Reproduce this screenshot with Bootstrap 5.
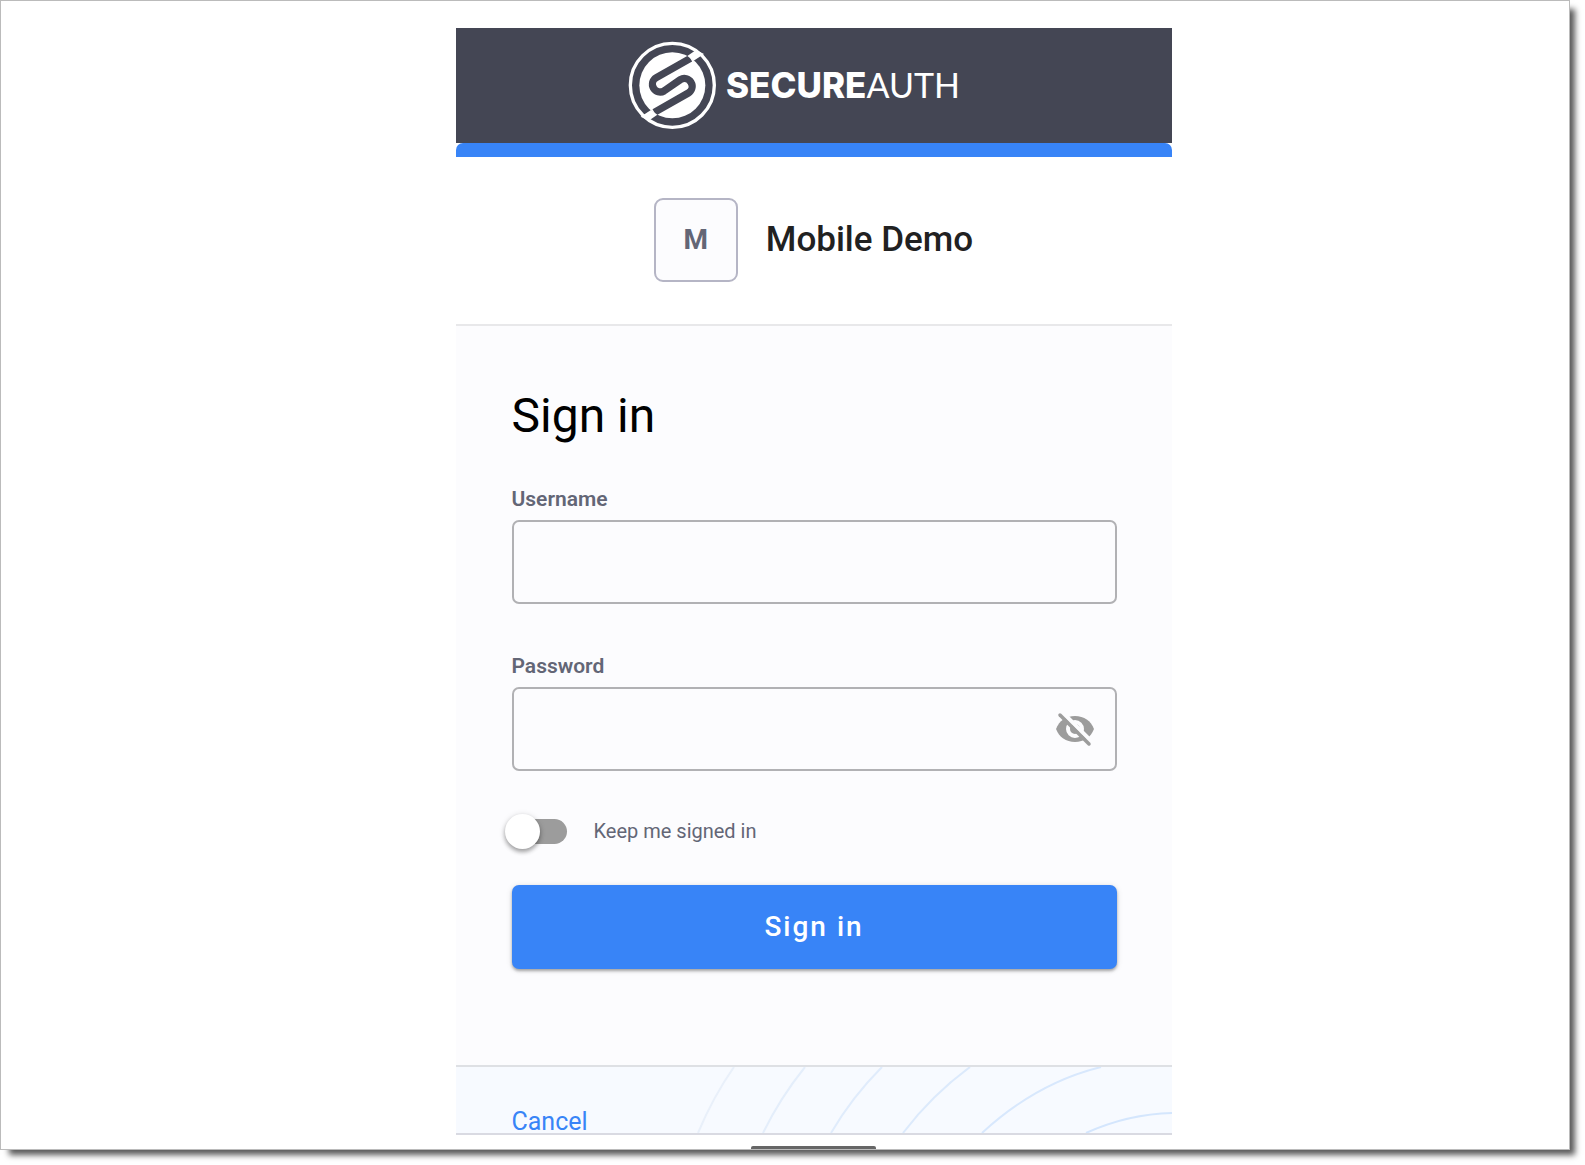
<!DOCTYPE html>
<html lang="en">
<head>
<meta charset="utf-8">
<meta name="viewport" content="width=device-width, initial-scale=1">
<title>Sign in</title>
<link rel="stylesheet" href="https://cdn.jsdelivr.net/npm/bootstrap@5.3.0/dist/css/bootstrap.min.css">
<style>
  :root {
    --sa-blue: #3884f7;
    --sa-slate: #444654;
    --sa-muted: #636676;
    --sa-panel: #fcfcfe;
  }
  body { font-family: Roboto, "Liberation Sans", sans-serif; background: #fff; }
  .sheet {
    margin: 0 15px 14px 0;
    padding-left: 57px;
    border: 1px solid #bbb;
    box-shadow: 7px 7px 6px -2px rgba(0, 0, 0, .65);
    background: #fff;
  }
  .phone { max-width: 716px; padding-top: 27px; }
  .brand-bar { background: var(--sa-slate); height: 115px; padding: 0 32px 2px 0; }
  .accent { height: 14px; background: var(--sa-blue); border-radius: 7px 7px 0 0; }
  .app-row { padding: 41px 0 42px; gap: 28px; border-bottom: 2px solid #e8e8ea; }
  .app-tile {
    width: 84px; height: 84px; border: 2px solid #b5b5c5; border-radius: 9px;
    background: var(--sa-panel); color: var(--sa-muted); font-size: 28px; font-weight: 700;
  }
  .app-name { font-size: 35px; line-height: 42px; font-weight: 500; color: #212121; }
  .signin { background: var(--sa-panel); padding: 62px 55px 96px 56px; }
  .signin h1 { font-size: 48px; line-height: 56px; font-weight: 400; color: #000; margin-bottom: 43px; }
  .field-label { font-size: 21px; line-height: 24px; font-weight: 600; color: var(--sa-muted); margin-bottom: 9px; }
  .field-box, .field-box:focus {
    height: 84px; border: 2px solid #b1b1b4; border-radius: 7px;
    background: var(--sa-panel); font-size: 24px; padding: 0 72px 0 20px;
  }
  .field-gap { margin-bottom: 50px; }
  .eye-btn { right: 22px; top: 22px; width: 40px; height: 40px; line-height: 0; }
  .keep-row { margin: 40px 0 34px; height: 40px; gap: 27px; }
  .keep-switch {
    appearance: none; position: relative; width: 55px; height: 25px;
    border-radius: 13px; background: #9c9c9c; margin: 0;
  }
  .keep-switch::before {
    content: ""; position: absolute; left: -7px; top: -5px; width: 35px; height: 35px;
    border-radius: 50%; background: #fff;
    box-shadow: 0 3px 4px rgba(0, 0, 0, .3), 0 1px 6px rgba(0, 0, 0, .15);
  }
  .keep-switch:checked::before { left: 28px; }
  .keep-label { font-size: 20px; line-height: 24px; color: var(--sa-muted); }
  .submit-btn, .submit-btn:hover {
    height: 84px; background: var(--sa-blue); color: #fff; border: 0; border-radius: 7px;
    font-size: 28px; font-weight: 500; letter-spacing: 2px;
    box-shadow: 0 2px 3px rgba(0, 0, 0, .3), 0 1px 6px rgba(0, 0, 0, .12);
  }
  .foot { height: 70px; background: #f7faff; border-top: 2px solid #dee0e4; border-bottom: 2px solid #d9dae2; overflow: hidden; }
  .foot-arcs { right: 0; top: 0; width: 716px; height: 66px; }
  .foot-link { font-size: 25px; line-height: 30px; color: var(--sa-blue); margin: 40px 0 0 56px; }
  .home-handle { width: 125px; height: 3px; margin-top: 11px; background: #666; border-radius: 2px 2px 0 0; }
</style>
</head>
<body>
<div class="sheet">
  <main class="phone w-100 mx-auto">
    <header class="brand-bar d-flex justify-content-center align-items-center">
      <svg width="340" height="90" viewBox="0 0 340 90" role="img" aria-label="SecureAuth">
        <g transform="scale(.33333)">
          <circle cx="133" cy="136" r="126" fill="none" stroke="#fff" stroke-width="10"/>
          <circle cx="133" cy="136" r="99" fill="#fff"/>
          <path d="M187 55 85 113A23 23 0 0 0 108 153L157 119A23 23 0 0 1 181 159L79 217" fill="none" stroke="#444654" stroke-width="22"/>
          <path d="M178 48 204 30 228 42 197 62zM88 224 62 242 38 230 69 210z" fill="#fff"/>
        </g>
        <text x="98" y="58" fill="#fff" font-family="Inter, sans-serif" font-size="35" font-weight="800">SECURE<tspan font-family="Lato, sans-serif" font-size="34" font-weight="400">AUTH</tspan></text>
      </svg>
    </header>
    <div class="accent"></div>

    <section class="app-row d-flex justify-content-center align-items-center">
      <div class="app-tile d-flex justify-content-center align-items-center">M</div>
      <div class="app-name">Mobile Demo</div>
    </section>

    <form class="signin">
      <h1>Sign in</h1>
      <div class="field-gap">
        <label class="field-label d-block" for="username">Username</label>
        <input class="form-control field-box" type="text" id="username" autocomplete="username">
      </div>
      <div>
        <label class="field-label d-block" for="password">Password</label>
        <div class="position-relative">
          <input class="form-control field-box" type="password" id="password" autocomplete="current-password">
          <button class="eye-btn btn border-0 p-0 position-absolute" type="button" aria-label="Show password">
            <svg width="40" height="40" viewBox="0 0 40 40" fill="none">
              <path d="M1 20C4 12 11 7 20 7s16 5 19 13c-3 8-10 13-19 13S4 28 1 20z" fill="#9c9c9c"/>
              <circle cx="20" cy="20" r="7" fill="#9c9c9c" stroke="#fcfcfe" stroke-width="4"/>
              <path d="M8 4 38 34" stroke="#fcfcfe" stroke-width="4"/>
              <path d="M5 6 34 35" stroke="#9c9c9c" stroke-width="3.500" stroke-linecap="round"/>
            </svg>
          </button>
        </div>
      </div>
      <div class="keep-row d-flex align-items-center">
        <input class="keep-switch" type="checkbox" role="switch" id="keep">
        <label class="keep-label" for="keep">Keep me signed in</label>
      </div>
      <button class="btn submit-btn w-100" type="submit">Sign in</button>
    </form>

    <footer class="foot position-relative">
      <svg class="foot-arcs position-absolute" viewBox="0 0 716 66" fill="none" stroke="#d9e8fb" stroke-width="2" aria-hidden="true">
        <path d="M242 66Q257 30 278 0" stroke="#e9f0fa"/>
        <path d="M307 66Q324 31 349 0" stroke="#e4eefb"/>
        <path d="M375 66Q396 30 426 0" stroke="#e0ecfc"/>
        <path d="M447 66Q476 28 514 0" stroke="#dceafc"/>
        <path d="M526 66Q580 16 645 0" stroke="#d8e8fd"/>
        <path d="M630 66Q672 47 716 46" stroke="#d4e6fd"/>
      </svg>
      <a class="foot-link position-relative d-inline-block text-decoration-none" href="#">Cancel</a>
    </footer>
    <div class="home-handle mx-auto"></div>
  </main>
</div>
<script src="https://cdn.jsdelivr.net/npm/bootstrap@5.3.0/dist/js/bootstrap.bundle.min.js"></script>
</body>
</html>
